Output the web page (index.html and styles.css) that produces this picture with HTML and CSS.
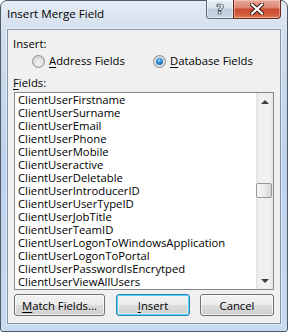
FILE: index.html
```html
<!DOCTYPE html>
<html>
  <head>
    <title>Insert Merge Field</title>
    <link rel="stylesheet" href="styles.css">
  </head>
  <body>
    <div class="window">
      <div class="titlebar">
        <span class="title">Insert Merge Field</span>
        <div class="caption-btns">
          <span class="cap-btn help-btn"><span class="help-glyph">?</span></span>
          <span class="cap-btn close-btn">
            <svg width="14" height="12" viewBox="0 0 14 12">
              <path d="M2 1.5 L12 10.5 M12 1.5 L2 10.5" stroke="#3a1a14" stroke-width="4.2" stroke-linecap="square"/>
              <path d="M2 1.5 L12 10.5 M12 1.5 L2 10.5" stroke="#ffffff" stroke-width="2.2" stroke-linecap="square"/>
            </svg>
          </span>
        </div>
      </div>

      <div class="client">
        <div class="label">Insert:</div>
        <div class="radios">
          <label class="radio-opt"><span class="radio"></span><span><u>A</u>ddress Fields</span></label>
          <label class="radio-opt"><span class="radio checked"></span><span><u>D</u>atabase Fields</span></label>
        </div>

        <div class="label fields-label"><u>F</u>ields:</div>
        <div class="listbox">
          <ul class="items">
            <li>ClientUserFirstname</li>
            <li>ClientUserSurname</li>
            <li>ClientUserEmail</li>
            <li>ClientUserPhone</li>
            <li>ClientUserMobile</li>
            <li>ClientUseractive</li>
            <li>ClientUserDeletable</li>
            <li>ClientUserIntroducerID</li>
            <li>ClientUserUserTypeID</li>
            <li>ClientUserJobTitle</li>
            <li>ClientUserTeamID</li>
            <li>ClientUserLogonToWindowsApplication</li>
            <li>ClientUserLogonToPortal</li>
            <li>ClientUserPasswordIsEncrytped</li>
            <li>ClientUserViewAllUsers</li>
          </ul>
          <div class="scrollbar">
            <div class="arrow"><span class="tri-up"></span></div>
            <div class="track">
              <div class="thumb" style="margin-top: 73px"></div>
            </div>
            <div class="arrow"><span class="tri-down"></span></div>
          </div>
        </div>

        <div class="buttons">
          <button class="btn match-btn"><u>M</u>atch Fields...</button>
          <button class="btn default-btn"><u>I</u>nsert</button>
          <button class="btn">Cancel</button>
        </div>
      </div>
    </div>
  </body>
</html>
```

FILE: styles.css
```css
body {
  margin: 0;
  background-color: #ffffff;
  font-family: "Open Sans", "Noto Sans", sans-serif;
  font-size: 11.3px;
  color: #000000;
}

.window {
  width: 288px;
  height: 332px;
  box-sizing: border-box;
  border: 1px solid #4d5a68;
  border-radius: 7px 7px 3px 3px;
  padding: 0 6px 7px 6px;
  background: linear-gradient(to bottom, #e4ebf4 0px, #cfdcec 40px, #bdd3ec 160px, #c6dbf1 332px);
  display: flex;
  flex-direction: column;
}

.titlebar {
  height: 28px;
  display: flex;
  align-items: flex-start;
  justify-content: space-between;
}

.title {
  margin-top: 5px;
  line-height: 16px;
  font-size: 11.6px;
  color: #000000;
}

.caption-btns {
  display: flex;
  margin-top: -1px;
}

.cap-btn {
  height: 19px;
  box-sizing: border-box;
  border: 1px solid #5d6d80;
  border-top: none;
  display: flex;
  align-items: center;
  justify-content: center;
}

.help-btn {
  width: 27px;
  border-right: none;
  border-radius: 0 0 0 4px;
  background: linear-gradient(to bottom, #e8edf4 0%, #d9e2ec 45%, #bccbdc 50%, #c9d6e4 100%);
  box-shadow: inset 0 0 0 1px rgba(255, 255, 255, 0.5);
}

.help-glyph {
  font-family: "DejaVu Sans", sans-serif;
  font-weight: bold;
  font-size: 14px;
  line-height: 14px;
  color: #ffffff;
  -webkit-text-stroke: 0.6px #2f3b48;
  text-shadow: 0 0 1px #2f3b48;
}

.close-btn {
  width: 48px;
  border-radius: 0 0 4px 0;
  border-color: #6a2a20;
  background: linear-gradient(to bottom, #e9a99b 0%, #dc8470 45%, #c8462d 50%, #d2603f 85%, #e08a60 100%);
  box-shadow: inset 0 0 0 1px rgba(255, 220, 210, 0.45);
}

.client {
  flex: 1;
  background-color: #f0f0f0;
  border: 1px solid #8594a6;
  box-shadow: 0 0 0 1px rgba(255, 255, 255, 0.45);
  padding: 6px 6px 0 6px;
  display: flex;
  flex-direction: column;
}

.label {
  line-height: 15px;
  margin-left: -1px;
}

u {
  text-decoration: underline;
  text-underline-offset: 2px;
}

.radios {
  display: flex;
  margin-top: 2px;
  padding-left: 18px;
  height: 15px;
}

.radio-opt {
  width: 122px;
  display: flex;
  align-items: center;
  gap: 4px;
  line-height: 15px;
}

.radio {
  width: 13px;
  height: 13px;
  box-sizing: border-box;
  border-radius: 50%;
  border: 1px solid #8c8c8c;
  background: radial-gradient(circle at 50% 60%, #f4f4f4 0%, #dedede 55%, #c8c8c8 100%);
  margin-top: 2px;
  display: flex;
  align-items: center;
  justify-content: center;
}

.radio.checked::after {
  content: "";
  width: 7px;
  height: 7px;
  border-radius: 50%;
  background: radial-gradient(circle at 45% 35%, #9ad6ff 0%, #2e8ad8 40%, #135291 100%);
}

.fields-label {
  margin-top: 7px;
}

.listbox {
  margin-top: 2px;
  height: 198px;
  box-sizing: border-box;
  border: 1px solid #828790;
  background-color: #ffffff;
  display: flex;
}

.items {
  flex: 1;
  list-style: none;
  margin: 0;
  padding: 0 0 0 3px;
  overflow: hidden;
}

.items li {
  height: 13px;
  line-height: 13px;
  white-space: nowrap;
}

.scrollbar {
  width: 17px;
  display: flex;
  flex-direction: column;
  background: linear-gradient(to right, #e2e2e2 0px, #f0f0f0 3px, #f0f0f0 13px, #e6e6e6 17px);
}

.arrow {
  height: 17px;
  display: flex;
  align-items: center;
  justify-content: center;
}

.tri-up {
  width: 0;
  height: 0;
  border-left: 4px solid transparent;
  border-right: 4px solid transparent;
  border-bottom: 4px solid #404040;
}

.tri-down {
  width: 0;
  height: 0;
  border-left: 4px solid transparent;
  border-right: 4px solid transparent;
  border-top: 4px solid #404040;
}

.track {
  flex: 1;
}

.thumb {
  height: 15px;
  width: 16px;
  box-sizing: border-box;
  border: 1px solid #979797;
  border-radius: 2px;
  background: linear-gradient(to right, #f6f6f6 0%, #e8e8e8 60%, #d4d4d4 100%);
}

.buttons {
  margin-top: 4px;
  display: flex;
  gap: 10px;
}

.btn {
  width: 74px;
  height: 22px;
  box-sizing: border-box;
  border: 1px solid #707070;
  border-radius: 3px;
  background: linear-gradient(to bottom, #f2f2f2 0%, #ebebeb 50%, #dddddd 50%, #cfcfcf 100%);
  box-shadow: inset 0 0 0 1px rgba(255, 255, 255, 0.7);
  font-family: "Open Sans", "Noto Sans", sans-serif;
  font-size: 11.3px;
  color: #000000;
  padding: 0;
  line-height: 15px;
}

.match-btn {
  width: 91px;
  margin-right: auto;
}

.default-btn {
  border-color: #3c7fb1;
  box-shadow: inset 0 0 0 1px #48d8fb, inset 0 0 0 2px rgba(255, 255, 255, 0.4);
}
```
